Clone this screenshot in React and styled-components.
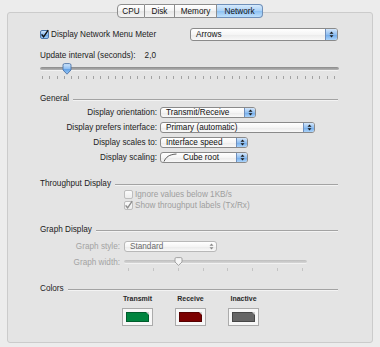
import React from 'react';
import styled, { createGlobalStyle } from 'styled-components';

const Global = createGlobalStyle`
  html, body { margin: 0; padding: 0; background: #ececec; }
  body {
    width: 380px; height: 347px; overflow: hidden;
    font-family: "Liberation Sans", Arial, sans-serif;
    font-size: 8.2px; color: #1c1c1c;
  }
`;

const Window = styled.div`
  width: 380px; height: 347px; box-sizing: border-box; padding-top: 4px;
  display: flex; flex-direction: column;
`;

const TabBar = styled.div`
  display: flex; justify-content: center; position: relative; z-index: 1;
  height: 14px; margin-bottom: -6px;
`;

const Tab = styled.div`
  width: ${p => p.$w}px; height: 14px; box-sizing: border-box;
  display: flex; align-items: center; justify-content: center;
  border: 1px solid #8d8d8d;
  border-left-width: ${p => (p.$first ? 1 : 0)}px;
  border-radius: ${p => (p.$first ? '4px 0 0 4px' : p.$last ? '0 4px 4px 0' : '0')};
  background: ${p => p.$active
    ? 'linear-gradient(#d6eafc, #a9d0f6 50%, #8cc0f2 51%, #bfe0fb)'
    : 'linear-gradient(#ffffff, #f3f3f3 50%, #e6e6e6 51%, #f5f5f5)'};
  border-color: ${p => (p.$active ? '#6f8fb8' : '#8d8d8d')};
  font-size: 8.2px; color: #111;
`;

const Panel = styled.div`
  margin: 0 7px; height: 331px; box-sizing: border-box;
  border: 1px solid #cbcbcb; border-radius: 3px; background: #e4e4e4;
  padding: 15px 34px 0 32px;
  display: flex; flex-direction: column;
`;

const TopRow = styled.div`
  display: grid; grid-template-columns: 150px 148px; align-items: center; height: 13px;
`;

const CheckLine = styled.label`
  display: flex; align-items: center; gap: 2px; height: 10px;
  margin-left: ${p => p.$indent || 0}px;
  color: ${p => (p.$disabled ? '#9e9e9e' : '#1c1c1c')};
`;

const Box = styled.span`
  width: 9px; height: 9px; box-sizing: border-box; border-radius: 2px; flex: none;
  display: flex; align-items: center; justify-content: center;
  border: 1px solid ${p => (p.$disabled ? '#bdbdbd' : '#4d76ab')};
  background: ${p => (p.$disabled
    ? 'linear-gradient(#fbfbfb, #ececec)'
    : 'linear-gradient(#d4e7fb, #8ab9ee 50%, #5d9be3 51%, #a6d0f8)')};
`;

const Popup = styled.div`
  width: ${p => p.$w}px; height: ${p => p.$h || 11}px; box-sizing: border-box;
  border: 1px solid ${p => (p.$disabled ? '#b8b8b8' : '#8a8a8a')};
  border-radius: 3px; overflow: hidden;
  background: linear-gradient(#ffffff, #f5f5f5 50%, #eaeaea 51%, #f9f9f9);
  display: flex; align-items: center;
  color: ${p => (p.$disabled ? '#6a6a6a' : '#111')};
`;

const PopupText = styled.span`
  flex: 1; padding-left: ${p => p.$pad || 5}px; white-space: nowrap;
  display: flex; align-items: center; gap: 6px;
`;

const Stepper = styled.span`
  width: ${p => p.$w || 10}px; align-self: stretch; flex: none;
  display: flex; align-items: center; justify-content: center;
  border-left: 1px solid ${p => (p.$disabled ? 'transparent' : '#6f8fbd')};
  background: ${p => (p.$disabled
    ? 'transparent'
    : 'linear-gradient(#d3e6fb, #92c0f1 50%, #6ea9ea 51%, #acd4fa)')};
`;

const Label = styled.div`
  height: 10px; line-height: 10px; white-space: nowrap;
  color: ${p => (p.$disabled ? '#a3a3a3' : '#1c1c1c')};
  text-align: ${p => p.$align || 'left'};
`;

const IntervalLine = styled.div`
  display: flex; gap: 9px; margin-top: 10px; height: 10px; line-height: 10px;
`;

const SliderBlock = styled.div`
  position: relative; width: ${p => p.$w}px; height: ${p => p.$h}px; flex: none;
`;

const Track = styled.div`
  margin-top: ${p => p.$top}px; height: 3px; border-radius: 2px;
  background: ${p => (p.$disabled
    ? 'linear-gradient(#bdbdbd, #d6d6d6)'
    : 'linear-gradient(#8a8a8a, #b5b5b5)')};
  border-bottom: 1px solid #f2f2f2;
`;

const Ticks = styled.div`
  display: flex; justify-content: space-between;
  margin-top: ${p => p.$top}px; padding: 0 ${p => p.$pr}px 0 ${p => p.$pl}px;
`;

const Tick = styled.span`
  width: 1px; height: 3px; background: ${p => (p.$disabled ? '#c4c4c4' : '#a2a2a2')};
`;

const Thumb = styled.svg`
  position: absolute; top: ${p => p.$top}px;
`;

const Header = styled.div`
  display: flex; align-items: center; gap: 4px; height: 10px;
  margin-top: ${p => p.$mt}px;
`;

const HeaderTitle = styled.span`
  white-space: nowrap; color: #1c1c1c;
`;

const Rule = styled.span`
  flex: 1; height: 0; margin-top: 3px;
  border-top: 1px solid #a3a3a3; border-bottom: 1px solid #f3f3f3;
`;

const FormGrid = styled.div`
  display: grid; grid-template-columns: ${p => p.$label}px auto;
  column-gap: ${p => p.$gap}px; row-gap: 4px; align-items: center; justify-items: start;
  margin-top: ${p => p.$mt}px;
  & > ${Label} { justify-self: end; }
`;

const CheckGroup = styled.div`
  display: flex; flex-direction: column; gap: 1px; margin-top: 1px;
`;

const ColorRow = styled.div`
  display: flex; gap: 22px; margin-left: 82px; margin-top: 1px;
`;

const ColorCol = styled.div`
  width: 31px; display: flex; flex-direction: column; align-items: center; gap: 4px;
`;

const ColorLabel = styled.div`
  height: 10px; line-height: 10px; font-size: 7px; font-weight: bold; color: #2a2a2a; white-space: nowrap;
`;

const Well = styled.div`
  width: 31px; height: 18px; box-sizing: border-box; padding: 3px;
  border: 1px solid #ababab; background: #f7f7f7;
`;

const Swatch = styled.div`
  position: relative; height: 100%; box-sizing: border-box;
  background: ${p => p.$color}; border: 1px solid rgba(0,0,0,0.3);
  &::after {
    content: ''; position: absolute; top: -1px; right: -1px; width: 0; height: 0;
    border-top: 3px solid #cfcfcf; border-left: 3px solid transparent;
  }
`;

const Arrows = ({ disabled }) => (
  <svg width="5" height="7" viewBox="0 0 5 7">
    <path d="M2.5 0.5 L4.5 2.8 H0.5 Z M2.5 6.5 L4.5 4.2 H0.5 Z" fill={disabled ? '#8a8a8a' : '#1a1a1a'} />
  </svg>
);

const CheckMark = ({ disabled }) => (
  <svg width="9" height="9" viewBox="0 0 9 9" style={{ overflow: 'visible' }}>
    <path d="M1.6 4.4 L3.6 6.8 L8.2 0.2" fill="none" stroke={disabled ? '#8d8d8d' : '#111'} strokeWidth="1.4" />
  </svg>
);

const BlueThumb = ({ left, top }) => (
  <Thumb $top={top} style={{ left }} width="10" height="12" viewBox="0 0 10 12">
    <defs>
      <linearGradient id="bt" x1="0" y1="0" x2="0" y2="1">
        <stop offset="0" stopColor="#d2e7fc" />
        <stop offset="0.5" stopColor="#8dbdf1" />
        <stop offset="0.51" stopColor="#5f9fe6" />
        <stop offset="1" stopColor="#9ccbf7" />
      </linearGradient>
    </defs>
    <path d="M1 2.2 Q1 0.6 2.6 0.6 H7.4 Q9 0.6 9 2.2 V7 L5 11.2 L1 7 Z" fill="url(#bt)" stroke="#4f74a6" strokeWidth="0.9" />
  </Thumb>
);

const GrayThumb = ({ left, top }) => (
  <Thumb $top={top} style={{ left }} width="9" height="9" viewBox="0 0 9 9">
    <path d="M1 1.8 Q1 0.6 2.2 0.6 H6.8 Q8 0.6 8 1.8 V5 L4.5 8.4 L1 5 Z" fill="#f6f6f6" stroke="#9a9a9a" strokeWidth="0.9" />
  </Thumb>
);

const CurveIcon = () => (
  <svg width="14" height="9" viewBox="0 0 14 9">
    <path d="M1 8.5 C3 4, 6 1.5, 13.5 1" fill="none" stroke="#333" strokeWidth="0.8" />
  </svg>
);

const Select = ({ w, h, text, disabled, stepW, children, pad }) => (
  <Popup $w={w} $h={h} $disabled={disabled}>
    <PopupText $pad={pad}>{children}{text}</PopupText>
    <Stepper $w={stepW} $disabled={disabled}><Arrows disabled={disabled} /></Stepper>
  </Popup>
);

const tabs = [
  { name: 'CPU', w: 28 },
  { name: 'Disk', w: 30 },
  { name: 'Memory', w: 42 },
  { name: 'Network', w: 46, active: true },
];

export default function App() {
  const bigTicks = Array.from({ length: 41 });
  const smallTicks = Array.from({ length: 8 });
  return (
    <Window>
      <Global />
      <TabBar>
        {tabs.map((t, i) => (
          <Tab key={t.name} $w={t.w} $first={i === 0} $last={i === tabs.length - 1} $active={t.active}>
            {t.name}
          </Tab>
        ))}
      </TabBar>
      <Panel>
        <TopRow>
          <CheckLine>
            <Box><CheckMark /></Box>
            Display Network Menu Meter
          </CheckLine>
          <Select w={148} h={13} stepW={11} text="Arrows" />
        </TopRow>

        <IntervalLine>
          <span>Update interval (seconds):</span>
          <span>2,0</span>
        </IntervalLine>

        <SliderBlock $w={299} $h={20}>
          <Track $top={6} />
          <Ticks $top={5} $pl={2} $pr={4}>
            {bigTicks.map((_, i) => <Tick key={i} />)}
          </Ticks>
          <BlueThumb left={22} top={2} />
        </SliderBlock>

        <Header $mt={12}>
          <HeaderTitle>General</HeaderTitle>
          <Rule />
        </Header>

        <FormGrid $label={117} $gap={3} $mt={4}>
          <Label>Display orientation:</Label>
          <Select w={96} text="Transmit/Receive" />
          <Label>Display prefers interface:</Label>
          <Select w={155} text="Primary (automatic)" />
          <Label>Display scales to:</Label>
          <Select w={88} text="Interface speed" />
          <Label>Display scaling:</Label>
          <Select w={88} text="Cube root" pad={2}><CurveIcon /></Select>
        </FormGrid>

        <Header $mt={15}>
          <HeaderTitle>Throughput Display</HeaderTitle>
          <Rule />
        </Header>

        <CheckGroup>
          <CheckLine $indent={84} $disabled>
            <Box $disabled />
            Ignore values below 1KB/s
          </CheckLine>
          <CheckLine $indent={84} $disabled>
            <Box $disabled><CheckMark disabled /></Box>
            Show throughput labels (Tx/Rx)
          </CheckLine>
        </CheckGroup>

        <Header $mt={14}>
          <HeaderTitle>Graph Display</HeaderTitle>
          <Rule />
        </Header>

        <FormGrid $label={80} $gap={4} $mt={7}>
          <Label $disabled>Graph style:</Label>
          <Select w={93} text="Standard" disabled />
        </FormGrid>

        <FormGrid $label={80} $gap={4} $mt={3}>
          <Label $disabled>Graph width:</Label>
          <SliderBlock $w={183} $h={16}>
            <Track $top={5} $disabled />
            <Ticks $top={4} $pl={4} $pr={4}>
              {smallTicks.map((_, i) => <Tick key={i} $disabled />)}
            </Ticks>
            <GrayThumb left={50} top={2} />
          </SliderBlock>
        </FormGrid>

        <Header $mt={12}>
          <HeaderTitle>Colors</HeaderTitle>
          <Rule />
        </Header>

        <ColorRow>
          <ColorCol>
            <ColorLabel>Transmit</ColorLabel>
            <Well><Swatch $color="#00843f" /></Well>
          </ColorCol>
          <ColorCol>
            <ColorLabel>Receive</ColorLabel>
            <Well><Swatch $color="#7b0000" /></Well>
          </ColorCol>
          <ColorCol>
            <ColorLabel>Inactive</ColorLabel>
            <Well><Swatch $color="#666666" /></Well>
          </ColorCol>
        </ColorRow>
      </Panel>
    </Window>
  );
}
